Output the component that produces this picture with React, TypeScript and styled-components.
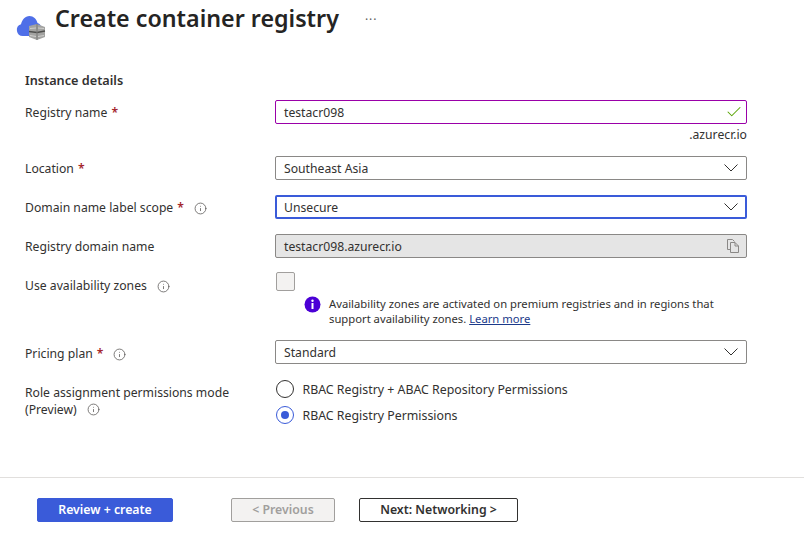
import * as React from 'react';
import styled, { createGlobalStyle } from 'styled-components';
import { Check, Info } from 'lucide-react';

const Global = createGlobalStyle`
  html, body { margin: 0; padding: 0; background: #fff; }
  body { font-family: 'Noto Sans', 'Open Sans', sans-serif; font-size: 12.2px; color: #323130; }
`;

const Page = styled.div`
  width: 804px;
  height: 547px;
  overflow: hidden;
  display: flex;
  flex-direction: column;
`;

const Header = styled.header`
  display: flex;
  height: 44px;
  padding-left: 16px;
`;

const Logo = styled.svg`
  width: 30px;
  height: 25px;
  margin-top: 15px;
`;

const Title = styled.h1`
  margin: 1px 0 0 9px;
  font-size: 23.25px;
  line-height: 34px;
  font-weight: 600;
  color: #252423;
`;

const More = styled.span`
  margin: 12px 0 0 26px;
  font-size: 12px;
  line-height: 16px;
  color: #605e5c;
  letter-spacing: 1px;
`;

const Form = styled.main`
  flex: 1;
  padding: 26px 57px 0 25px;
`;

const Section = styled.h2`
  margin: 0 0 10px;
  font-size: 12.7px;
  line-height: 20px;
  font-weight: 600;
  color: #323130;
`;

const Row = styled.div<{ $gap: number }>`
  display: grid;
  grid-template-columns: 250px 472px;
  margin-bottom: ${(p) => p.$gap}px;
`;

const Label = styled.label<{ $drop?: number }>`
  box-sizing: border-box;
  display: flex;
  align-items: center;
  height: 24px;
  padding-top: ${(p) => p.$drop ?? 2}px;
  line-height: 16px;
`;

const TallLabel = styled.div`
  line-height: 17px;
  margin-top: 4px;
`;

const Star = styled.span`
  color: #a4262c;
  margin-left: 4px;
  font-weight: 600;
`;

const Tip = styled(Info)`
  width: 13px;
  height: 13px;
  margin-left: 10px;
  color: #605e5c;
  stroke-width: 1.5;
`;

const InlineTip = styled(Tip)`
  vertical-align: -2px;
`;

const Field = styled.div<{ $tone?: 'valid' | 'focus' | 'disabled' }>`
  box-sizing: border-box;
  height: 24px;
  display: flex;
  align-items: center;
  justify-content: space-between;
  border-radius: 2px;
  border: ${(p) =>
    p.$tone === 'focus' ? '2px solid #3a5bd9' : p.$tone === 'valid' ? '1px solid #9a00a8' : '1px solid #8a8886'};
  background: ${(p) => (p.$tone === 'disabled' ? '#e5e5e5' : '#fff')};
  padding-left: ${(p) => (p.$tone === 'focus' ? 7 : 8)}px;
  padding-right: ${(p) => (p.$tone === 'focus' ? 7 : 8)}px;
`;

const Suffix = styled.div`
  text-align: right;
  line-height: 22px;
  height: 20px;
`;

const ChevronIcon = styled.svg`
  width: 14px;
  height: 8px;
  fill: none;
  stroke: #323130;
  stroke-width: 1;
`;

const Chevron = () => (
  <ChevronIcon viewBox="0 0 14 8">
    <path d="M0.500 0.500L7 7L13.500 0.500" />
  </ChevronIcon>
);

const ValidMark = styled(Check)`
  width: 18px;
  height: 18px;
  color: #57a300;
  stroke-width: 1.4;
  margin-right: -5px;
`;

const CopyIcon = styled.svg`
  width: 12px;
  height: 14px;
  fill: none;
  stroke: #8a8886;
  stroke-width: 1;
  margin-right: -1px;
`;

const CopyMark = () => (
  <CopyIcon viewBox="0 0 12 14">
    <path d="M3.500 10.500H0.500V0.500H5.500L7.500 2.500" />
    <path d="M3.500 3.500H8L11.500 7V13.500H3.500ZM8 3.500V7H11.500" />
  </CopyIcon>
);

const CheckBox = styled.div`
  box-sizing: border-box;
  width: 19px;
  height: 19px;
  margin: 0 0 5px 1px;
  border: 1px solid #a19f9d;
  border-radius: 2px;
  background: #f3f2f1;
`;

const Note = styled.div`
  display: flex;
  gap: 8px;
  padding-left: 29px;
  font-size: 11.26px;
  line-height: 15px;
`;

const NoteBadge = styled.svg`
  flex: none;
  width: 17px;
  height: 17px;
`;

const MoreLink = styled.a`
  color: #1b3a8a;
  text-decoration: underline;
`;

const Radios = styled.div`
  display: flex;
  flex-direction: column;
  gap: 8px;
`;

const RadioRow = styled.div`
  display: flex;
  align-items: center;
  gap: 9px;
  height: 18px;
  font-size: 12.35px;
`;

const RadioDot = styled.span<{ $on?: boolean }>`
  box-sizing: border-box;
  width: 18px;
  height: 18px;
  margin-left: 0.5px;
  border-radius: 50%;
  border: 1px solid ${(p) => (p.$on ? '#3a5bd9' : '#323130')};
  display: flex;
  align-items: center;
  justify-content: center;
  &::after {
    content: '';
    width: 8px;
    height: 8px;
    border-radius: 50%;
    background: ${(p) => (p.$on ? '#3a5bd9' : 'transparent')};
  }
`;

const Footer = styled.footer`
  border-top: 1px solid #e1dfdd;
  height: 70px;
  box-sizing: border-box;
  padding: 20px 0 0 37px;
  display: flex;
`;

const Button = styled.button<{ $kind: 'primary' | 'disabled' | 'outline'; $w: number; $ml?: number }>`
  box-sizing: border-box;
  height: 24px;
  width: ${(p) => p.$w}px;
  margin-left: ${(p) => p.$ml ?? 0}px;
  padding: 0 0 2px;
  border-radius: 2px;
  font-family: inherit;
  font-size: 12.3px;
  font-weight: 600;
  border: 1px solid ${(p) => (p.$kind === 'primary' ? '#3a5bd9' : p.$kind === 'disabled' ? '#a19f9d' : '#323130')};
  background: ${(p) => (p.$kind === 'primary' ? '#3a5bd9' : p.$kind === 'disabled' ? '#f3f2f1' : '#fff')};
  color: ${(p) => (p.$kind === 'primary' ? '#fff' : p.$kind === 'disabled' ? '#a19f9d' : '#323130')};
`;

export default function App() {
  return (
    <Page>
      <Global />
      <Header>
        <Logo viewBox="0 0 30 25">
          <path
            d="M7 21a6 6 0 0 1-2-11.700C6 5 9 1 13.500 1c4 0 7 3 8 7 2.500.5 3.500 2.500 3.500 5 0 4-2.500 8-6 8z"
            fill="#4f6fe8"
          />
          <path d="M13 11l8-2 8 3v10l-8 3-8-3z" fill="#a3a3a1" />
          <path d="M13 16.500l8 1 8-1.500" stroke="#4f4f4d" strokeWidth="1.500" fill="none" />
          <path d="M21 9v16" stroke="#7a7a78" strokeWidth="1" fill="none" />
          <path d="M14 13.500l6-.5M14 20.500l6 1M22 13l6 .5M22 21.500l6-1" stroke="#cfcfcd" strokeWidth="1" fill="none" />
        </Logo>
        <Title>Create container registry</Title>
        <More>···</More>
      </Header>
      <Form>
        <Section>Instance details</Section>
        <Row $gap={0}>
          <Label>
            Registry name<Star>*</Star>
          </Label>
          <Field $tone="valid">
            testacr098
            <ValidMark />
          </Field>
        </Row>
        <Row $gap={12}>
          <span />
          <Suffix>.azurecr.io</Suffix>
        </Row>
        <Row $gap={15}>
          <Label>
            Location<Star>*</Star>
          </Label>
          <Field>
            Southeast Asia
            <Chevron />
          </Field>
        </Row>
        <Row $gap={15}>
          <Label>
            Domain name label scope<Star>*</Star>
            <Tip />
          </Label>
          <Field $tone="focus">
            Unsecure
            <Chevron />
          </Field>
        </Row>
        <Row $gap={14}>
          <Label>Registry domain name</Label>
          <Field $tone="disabled">
            testacr098.azurecr.io
            <CopyMark />
          </Field>
        </Row>
        <Row $gap={14}>
          <Label $drop={4}>
            Use availability zones
            <Tip />
          </Label>
          <div>
            <CheckBox />
            <Note>
              <NoteBadge viewBox="0 0 17 17">
                <circle cx="8.500" cy="8.500" r="8" fill="#4b00d6" />
                <rect x="7.500" y="7" width="2" height="6" fill="#fff" />
                <circle cx="8.500" cy="4.800" r="1.200" fill="#fff" />
              </NoteBadge>
              <div>
                <div>Availability zones are activated on premium registries and in regions that</div>
                <div>
                  support availability zones. <MoreLink>Learn more</MoreLink>
                </div>
              </div>
            </Note>
          </div>
        </Row>
        <Row $gap={16}>
          <Label $drop={4}>
            Pricing plan<Star>*</Star>
            <Tip />
          </Label>
          <Field>
            Standard
            <Chevron />
          </Field>
        </Row>
        <Row $gap={0}>
          <TallLabel>
            Role assignment permissions mode
            <br />
            (Preview)
            <InlineTip />
          </TallLabel>
          <Radios>
            <RadioRow>
              <RadioDot />
              RBAC Registry + ABAC Repository Permissions
            </RadioRow>
            <RadioRow>
              <RadioDot $on />
              RBAC Registry Permissions
            </RadioRow>
          </Radios>
        </Row>
      </Form>
      <Footer>
        <Button $kind="primary" $w={136}>
          Review + create
        </Button>
        <Button $kind="disabled" $w={104} $ml={58}>
          &lt; Previous
        </Button>
        <Button $kind="outline" $w={159} $ml={24}>
          Next: Networking &gt;
        </Button>
      </Footer>
    </Page>
  );
}
